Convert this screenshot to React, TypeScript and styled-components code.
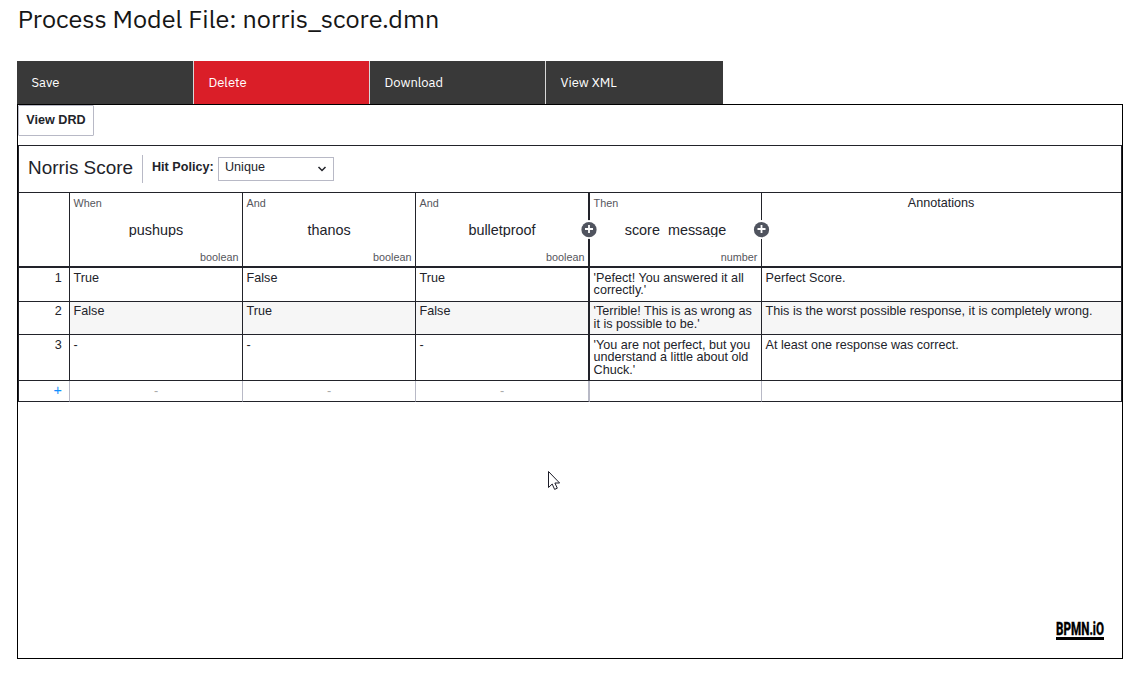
import React from "react";
import styled, { createGlobalStyle } from "styled-components";

const INK = "#22232a";
const MUTED = "#b8b9c6";
const PLEX = `"IBM Plex Sans", Roboto, "Liberation Sans", sans-serif`;

const GlobalStyle = createGlobalStyle`
  *, *::before, *::after { box-sizing: border-box; }
  body {
    margin: 0;
    background: #fff;
    color: ${INK};
    font-family: Arial, "Liberation Sans", sans-serif;
    font-size: 12.6px;
    line-height: 1;
  }
`;

const Page = styled.main`
  width: 1106px;
  margin-left: 17px;
`;

const Title = styled.h1`
  margin: 0;
  height: 61px;
  padding: 3px 0 0 0.8px;
  font: 400 25.2px/31px ${PLEX};
  letter-spacing: -0.015px;
  color: #161616;
  white-space: nowrap;
`;

const Toolbar = styled.div`
  display: grid;
  grid-template-columns: 176px 175px 175px 177px;
  column-gap: 1px;
  width: 706px;
  height: 43px;
  background: #d8d8d8;
`;

const ToolButton = styled.button<{ $danger?: boolean }>`
  border: 0;
  padding: 0 14.5px;
  text-align: left;
  color: #fff;
  background: ${(p) => (p.$danger ? "#da1e28" : "#393939")};
  font: 400 13px/16px ${PLEX};
`;

const Editor = styled.section`
  position: relative;
  height: 555px;
  border: 1px solid #000;
`;

const DrdButton = styled.button`
  display: block;
  width: 76px;
  height: 31px;
  margin: 0 0 9px;
  padding: 0 0 2px;
  border: 1px solid ${MUTED};
  border-radius: 1px;
  background: #fff;
  color: ${INK};
  font: 700 12.6px/16px Arial, "Liberation Sans", sans-serif;
`;

const Decision = styled.div`
  border: 1px solid ${INK};
  border-bottom: 0;
`;

const DecisionBar = styled.header`
  display: flex;
  align-items: center;
  height: 47px;
  padding-left: 9px;
  border-bottom: 1px solid ${INK};
`;

const DecisionName = styled.h2`
  width: 115px;
  height: 28px;
  margin: 0 9px 0 0;
  border-right: 1px solid ${MUTED};
  font-weight: 400;
  font-size: 18.9px;
  line-height: 25px;
  white-space: nowrap;
`;

const PolicyLabel = styled.label`
  width: 66px;
  padding-bottom: 4px;
  font-weight: 700;
  line-height: 16px;
  white-space: nowrap;
`;

const PolicySelect = styled.div`
  display: flex;
  justify-content: space-between;
  width: 116px;
  height: 24px;
  padding: 2px 6px 0;
  border: 1px solid ${MUTED};
  line-height: 14px;
  svg { margin-top: 5px; }
`;

const Table = styled.div`
  display: grid;
  grid-template-columns: 51px 173px 173px 174px 172px 1fr;
  grid-template-rows: 75px 34px 33px 46px 21px;
`;

const Cell = styled.div<{ $output?: boolean; $shade?: boolean; $faint?: boolean; $last?: boolean }>`
  padding: ${(p) => (p.$shade ? 3.3 : 3.6)}px 3.6px 0;
  border: 0 solid ${INK};
  border-bottom-width: 1px;
  border-right-width: ${(p) => (p.$last ? 0 : p.$output ? 2 : 1)}px;
  border-right-color: ${(p) => (p.$faint ? MUTED : INK)};
  background: ${(p) => (p.$shade ? "#f6f6f6" : "#fff")};
`;

const IndexCell = styled(Cell)`
  padding-right: 7.2px;
  text-align: right;
  background: #fff;
`;

const AddCell = styled(IndexCell)`
  color: #1090ff;
  font-size: 14.4px;
  padding-top: 2px;
`;

const EmptyCell = styled(Cell)`
  text-align: center;
  color: #aaa;
`;

const HeadCell = styled(Cell)`
  position: relative;
  display: flex;
  flex-direction: column;
  justify-content: space-between;
  padding: 5px 3.6px 3px;
  border-bottom-width: 2px;
`;

const Small = styled.span<{ $end?: boolean }>`
  align-self: ${(p) => (p.$end ? "flex-end" : "flex-start")};
  font-size: 10.8px;
  line-height: 11px;
  color: #55565c;
`;

const Clause = styled.span`
  height: 15px;
  margin-bottom: 2px;
  overflow: hidden;
  text-align: center;
  font-size: 14.4px;
  line-height: 17px;
`;

const Annotations = styled(HeadCell)`
  align-items: center;
  justify-content: flex-start;
  padding: 4px 4.6px 0 3.6px;
`;

const AddMark = styled.svg`
  position: absolute;
  z-index: 1;
  top: 27px;
`;

const Logo = styled.svg`
  position: absolute;
  right: 13px;
  bottom: 16px;
  overflow: visible;
`;

const Pointer = styled.svg`
  position: absolute;
  left: 529px;
  top: 365px;
`;

const AddColumn = ({ line }: { line: number }) => {
  const size = 18 + line;
  const c = size / 2;
  return (
    <AddMark width={size} height="19" viewBox={`0 0 ${size} 19`} style={{ right: -9 - line }}>
      <circle cx={c} cy="9.5" r="9.5" fill="#fff" />
      <circle cx={c} cy="9.7" r="7.6" fill="#50545f" />
      <path d={`M${c} 5v8M${c - 4} 9h8`} stroke="#fff" strokeWidth="1.8" />
    </AddMark>
  );
};

const inputs = [
  ["When", "pushups"],
  ["And", "thanos"],
  ["And", "bulletproof"],
];

const rules = [
  ["True", "False", "True", "'Pefect! You answered it all correctly.'", "Perfect Score."],
  ["False", "True", "False", "'Terrible! This is as wrong as it is possible to be.'", "This is the worst possible response, it is completely wrong."],
  ["-", "-", "-", "'You are not perfect, but you understand a little about old Chuck.'", "At least one response was correct."],
];

export default function App() {
  return (
    <>
      <GlobalStyle />
      <Page>
        <Title>Process Model File: norris_score.dmn</Title>
        <Toolbar>
          <ToolButton>Save</ToolButton>
          <ToolButton $danger>Delete</ToolButton>
          <ToolButton>Download</ToolButton>
          <ToolButton>View XML</ToolButton>
        </Toolbar>
        <Editor>
          <DrdButton>View DRD</DrdButton>
          <Decision>
            <DecisionBar>
              <DecisionName>Norris Score</DecisionName>
              <PolicyLabel>Hit Policy:</PolicyLabel>
              <PolicySelect>
                Unique
                <svg width="10" height="8" viewBox="0 0 10 8" fill="none" stroke={INK} strokeWidth="1.5">
                  <path d="M1.5 2l3.5 3.5L8.5 2" />
                </svg>
              </PolicySelect>
            </DecisionBar>
            <Table>
              <HeadCell />
              {inputs.map(([kind, name], i) => (
                <HeadCell key={name} $output={i === 2}>
                  <Small>{kind}</Small>
                  <Clause>{name}</Clause>
                  <Small $end>boolean</Small>
                  {i === 2 && <AddColumn line={2} />}
                </HeadCell>
              ))}
              <HeadCell>
                <Small>Then</Small>
                <Clause>score_message</Clause>
                <Small $end>number</Small>
                <AddColumn line={1} />
              </HeadCell>
              <Annotations $last>Annotations</Annotations>
              {rules.map((rule, r) => (
                <React.Fragment key={r}>
                  <IndexCell $shade={r === 1}>{r + 1}</IndexCell>
                  {rule.map((text, c) => (
                    <Cell key={c} $shade={r === 1} $output={c === 2} $last={c === 4}>
                      {text}
                    </Cell>
                  ))}
                </React.Fragment>
              ))}
              <AddCell $faint>+</AddCell>
              <EmptyCell $faint>-</EmptyCell>
              <EmptyCell $faint>-</EmptyCell>
              <EmptyCell $faint $output>-</EmptyCell>
              <EmptyCell $faint />
              <EmptyCell $last />
            </Table>
          </Decision>
          <Pointer width="14" height="22" viewBox="0 0 14 22">
            <path d="M1.5 1.5v16l3.7-3.5 2.4 5.4 2.7-1.2-2.4-5.2h4.7z" fill="#fff" stroke="#1c1c28" />
          </Pointer>
          <Logo width="54" height="25" viewBox="0 -3 54 25">
            <text x="1" y="15" fontFamily="Roboto, sans-serif" fontWeight="800" fontSize="18.5" textLength="48" lengthAdjust="spacingAndGlyphs" stroke="#000" strokeWidth="0.3">BPMN.iO</text>
            <path d="M1 17h48v3H1z" />
          </Logo>
        </Editor>
      </Page>
    </>
  );
}
